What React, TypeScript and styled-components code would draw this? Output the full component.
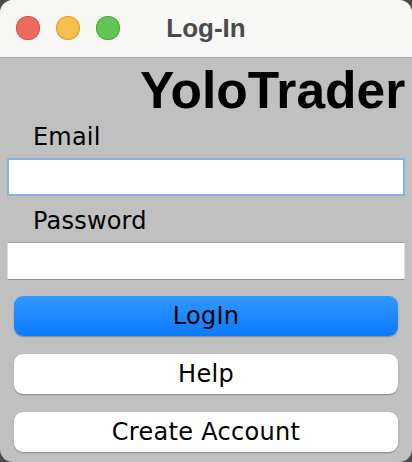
import styled, { createGlobalStyle } from "styled-components";

const GlobalStyle = createGlobalStyle`
  html, body {
    margin: 0;
    padding: 0;
    background: #4a4a47;
  }
  * {
    box-sizing: border-box;
  }
`;

const Window = styled.div`
  width: 412px;
  height: 462px;
  border-radius: 13px;
  overflow: hidden;
  background: #c0c0c0;
  display: flex;
  flex-direction: column;
`;

const TitleBar = styled.div`
  height: 58px;
  flex-shrink: 0;
  background: #f7f7f5;
  border-bottom: 1px solid #a9a9a9;
  display: grid;
  grid-template-columns: 1fr auto 1fr;
  align-items: center;
`;

const Lights = styled.div`
  display: flex;
  gap: 16px;
  padding-left: 16px;
  padding-bottom: 1px;
`;

const Light = styled.span<{ $color: string; $edge: string }>`
  width: 24px;
  height: 24px;
  border-radius: 50%;
  background: ${(p) => p.$color};
  box-shadow: inset 0 0 0 1px ${(p) => p.$edge};
`;

const Title = styled.div`
  font-family: "Liberation Sans", Arial, sans-serif;
  font-weight: bold;
  font-size: 26px;
  color: #4b4b4b;
  padding-bottom: 1px;
`;

const Body = styled.div`
  flex: 1;
  display: flex;
  flex-direction: column;
  padding: 0 7px;
`;

const Brand = styled.h1`
  margin: 7px 0 0 133px;
  font-family: "Liberation Sans", Arial, sans-serif;
  font-weight: bold;
  font-size: 51.5px;
  line-height: 50px;
  color: #000;
  white-space: nowrap;
`;

const Label = styled.label<{ $gap: number }>`
  display: block;
  margin: ${(p) => p.$gap}px 0 9px 26px;
  font-family: "DejaVu Sans", Verdana, sans-serif;
  font-size: 24px;
  line-height: 24px;
  letter-spacing: 0.2px;
  color: #000;
`;

const Field = styled.input<{ $focused?: boolean }>`
  width: 398px;
  height: 38px;
  margin: 0;
  padding: 0 6px;
  background: #fff;
  font-family: "DejaVu Sans", Verdana, sans-serif;
  font-size: 20px;
  outline: none;
  border: ${(p) => (p.$focused ? "2px solid #84b1e8" : "1px solid #dcdcdc")};
  ${(p) =>
    !p.$focused &&
    `border-top-color: #a3a3a3; border-bottom-color: #8e8e8e;`}
`;

const Button = styled.button<{ $primary?: boolean; $gap: number }>`
  margin: ${(p) => p.$gap}px 7px 0 7px;
  height: 40px;
  width: 384px;
  border: none;
  border-radius: 9px;
  display: flex;
  align-items: center;
  justify-content: center;
  font-family: "DejaVu Sans", Verdana, sans-serif;
  font-size: 24px;
  line-height: 24px;
  letter-spacing: 0.3px;
  color: #000;
  background: ${(p) =>
    p.$primary ? "linear-gradient(#3298ff, #0a7aff)" : "#ffffff"};
  box-shadow: 0 1px 1.5px rgba(0, 0, 0, 0.3);
  padding: 0;
`;

export default function App() {
  return (
    <>
      <GlobalStyle />
      <Window>
        <TitleBar>
          <Lights>
            <Light $color="#ee6a5f" $edge="#d5574c" />
            <Light $color="#f5be4f" $edge="#dca43b" />
            <Light $color="#62c554" $edge="#4ead42" />
          </Lights>
          <Title>Log-In</Title>
          <div />
        </TitleBar>
        <Body>
          <Brand>YoloTrader</Brand>
          <Label $gap={10}>Email</Label>
          <Field $focused />
          <Label $gap={13}>Password</Label>
          <Field type="password" />
          <Button $primary $gap={16}>LogIn</Button>
          <Button $gap={18}>Help</Button>
          <Button $gap={18}>Create Account</Button>
        </Body>
      </Window>
    </>
  );
}
